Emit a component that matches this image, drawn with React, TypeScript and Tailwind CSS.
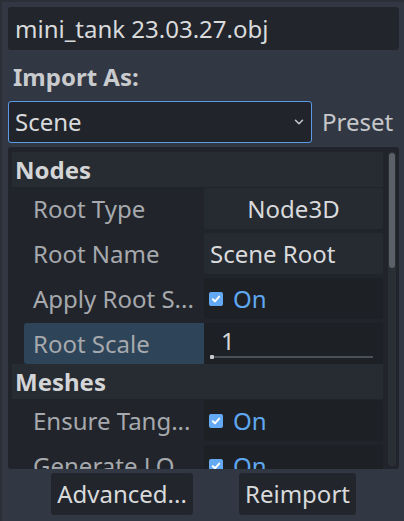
import { ChevronDown } from "lucide-react";

type Prop =
  | { kind: "button"; label: string; value: string }
  | { kind: "text"; label: string; value: string }
  | { kind: "check"; label: string }
  | { kind: "slider"; label: string; value: string; selected?: boolean };

const nodes: Prop[] = [
  { kind: "button", label: "Root Type", value: "Node3D" },
  { kind: "text", label: "Root Name", value: "Scene Root" },
  { kind: "check", label: "Apply Root S..." },
  { kind: "slider", label: "Root Scale", value: "1", selected: true },
];

const meshes: Prop[] = [
  { kind: "check", label: "Ensure Tang..." },
  { kind: "check", label: "Generate LO..." },
];

function CheckOn() {
  return (
    <div className="flex h-full items-center pl-[5px]">
      <span className="flex h-[14px] w-[14px] items-center justify-center rounded-[2px] bg-[#63a9f3]">
        <svg width="10" height="10" viewBox="0 0 10 10">
          <path d="M1.8 5.2 L4 7.3 L8.2 2.6" fill="none" stroke="#fff" strokeWidth="1.9" strokeLinecap="round" strokeLinejoin="round" />
        </svg>
      </span>
      <span className="ml-[10px] text-[#5fa8f1]">On</span>
    </div>
  );
}

function PropRow({ prop }: { prop: Prop }) {
  const selected = prop.kind === "slider" && prop.selected;
  return (
    <div className="flex h-[41px] shrink-0 pl-[12px]">
      <div
        className={`flex w-[180px] items-center overflow-hidden pl-[9px] text-[#a6a9ad] ${selected ? "rounded-l-[3px] bg-[#2e4458]" : ""}`}
      >
        <span className="whitespace-nowrap">{prop.label}</span>
      </div>
      {prop.kind === "button" && (
        <div className="flex w-[179px] items-center justify-center rounded-[3px] bg-[#262a31] text-[#d9dadc]">
          {prop.value}
        </div>
      )}
      {prop.kind === "text" && (
        <div className="flex w-[179px] items-center rounded-[3px] bg-[#262a31] pl-[6px] text-[#d9dadc]">
          {prop.value}
        </div>
      )}
      {prop.kind === "check" && (
        <div className="w-[179px] rounded-[3px] bg-[#1d2025]">
          <CheckOn />
        </div>
      )}
      {prop.kind === "slider" && (
        <div className="relative w-[179px] rounded-[3px] bg-[#1d2025] text-[#d9dadc]">
          <span className="absolute left-[17px] top-[6px]">{prop.value}</span>
          <div className="absolute bottom-[6px] left-[6px] right-[10px] h-[2px] bg-[#4b4f56]" />
          <div className="absolute bottom-[5px] left-[6px] h-[4px] w-[4px] rounded-[1px] bg-[#c9cacc]" />
        </div>
      )}
    </div>
  );
}

function Section({ title, props }: { title: string; props: Prop[] }) {
  return (
    <>
      <div className="flex h-[35px] shrink-0 items-center bg-[#272b32] pl-[3px] font-bold text-[#d4d5d7]">
        {title}
      </div>
      <div className="flex flex-col gap-[4px] pt-[1px]">
        {props.map((p) => (
          <PropRow key={p.label} prop={p} />
        ))}
      </div>
    </>
  );
}

export default function App() {
  return (
    <div className="flex h-[521px] w-[404px] flex-col overflow-hidden border-l-[2px] border-t-[2px] border-[#2a2f38] bg-[#323843] pl-[6px] pr-[5px] pt-[5px] font-['Noto_Sans',sans-serif] text-[24px] leading-none text-[#d9dadc]">
      <div className="flex h-[43px] shrink-0 items-center rounded-[3px] bg-[#22262c] pl-[7px]">
        mini_tank 23.03.27.obj
      </div>

      <div className="flex h-[51px] shrink-0 items-center pl-[5px] pt-[2px] font-bold text-[#c9cbce]">Import As:</div>

      <div className="flex h-[42px] shrink-0 items-center gap-[10px]">
        <div className="flex h-full w-[304px] items-center justify-between rounded-[3px] border border-[#5b9be6] bg-[#21252b] pl-[6px] pr-[5px]">
          <span>Scene</span>
          <ChevronDown size={14} strokeWidth={2.5} className="text-[#c9cbce]" />
        </div>
        <span className="text-[#c5c7ca]">Preset</span>
      </div>

      <div className="mt-[4px] flex h-[322px] shrink-0 rounded-[3px] bg-[#21252b] pt-[5px] pl-[4px]">
        <div className="flex w-[371px] flex-col overflow-hidden">
          <Section title="Nodes" props={nodes} />
          <Section title="Meshes" props={meshes} />
        </div>
        <div className="ml-[5px] mb-[3px] w-[8px] rounded-[3px] bg-[#2a2e35] p-[1px]">
          <div className="h-[115px] rounded-[3px] bg-[#5b6069]" />
        </div>
      </div>

      <div className="mt-[4px] flex h-[42px] shrink-0">
        <div className="ml-[43px] flex w-[142px] items-center justify-center rounded-[3px] bg-[#22262c]">Advanced...</div>
        <div className="ml-[46px] flex w-[117px] items-center justify-center rounded-[3px] bg-[#22262c]">Reimport</div>
      </div>
    </div>
  );
}
